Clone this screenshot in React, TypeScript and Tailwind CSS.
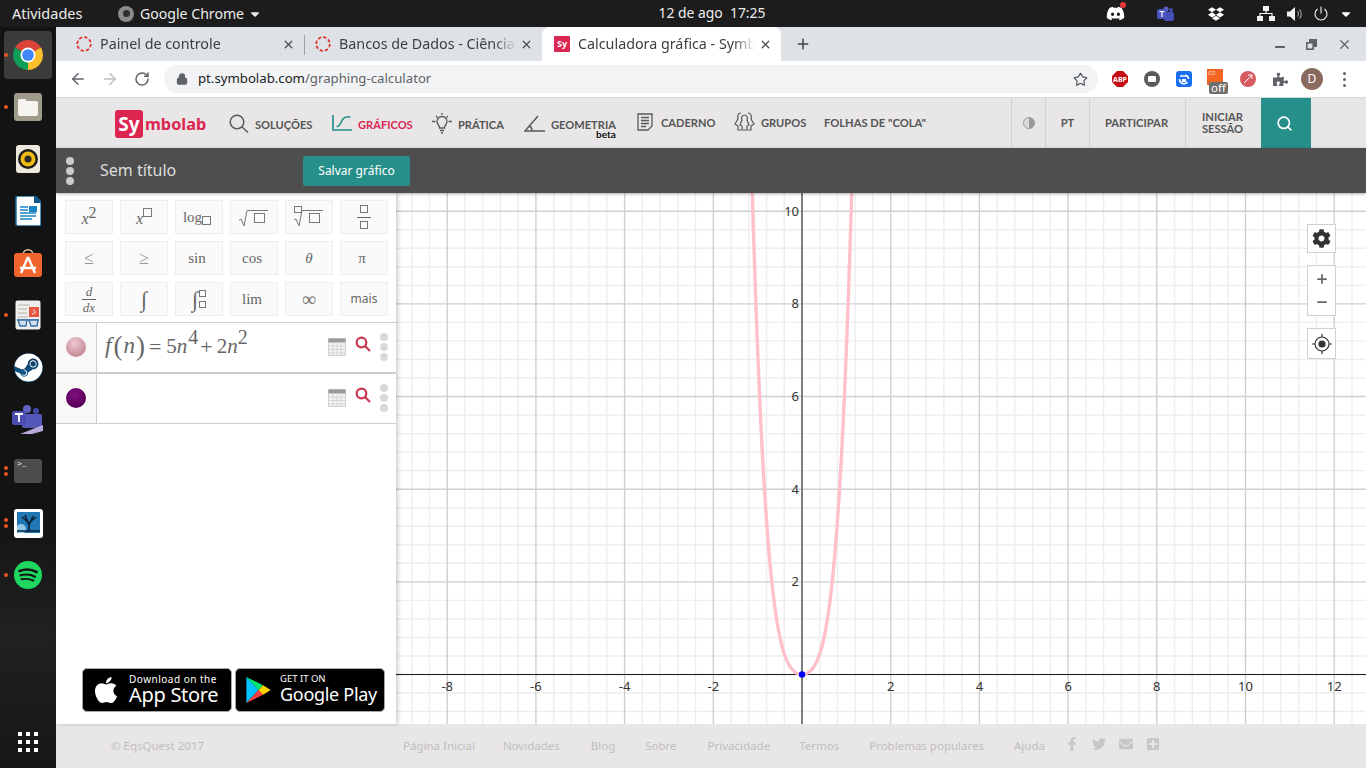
import React from "react";
import { FaApple, FaSteam, FaDiscord, FaDropbox, FaPuzzlePiece, FaFacebookF, FaTwitter, FaEnvelope, FaPlusSquare, FaCog, FaCaretDown } from "react-icons/fa";
import { ArrowLeft, ArrowRight, RotateCw, Lock, Star, X, Plus, Search, Minus } from "lucide-react";

const ux = 44.35, uy = 46.33, ox = 406, oy = 481.5;

const Chrome = ({ s = 48 }: { s?: number }) => (
  <svg width={s} height={s} viewBox="0 0 48 48">
    <path d="M24 24L6.7 14A20 20 0 0 1 41.3 14Z" fill="#db4437" />
    <path d="M24 24L41.3 14A20 20 0 0 1 24 44Z" fill="#fbc02d" />
    <path d="M24 24L24 44A20 20 0 0 1 6.7 14Z" fill="#0f9d58" />
    <circle cx="24" cy="24" r="10" fill="#fff" />
    <circle cx="24" cy="24" r="7.8" fill="#4285f4" />
  </svg>
);

const Dots = ({ n }: { n: number }) => (
  <div className="absolute left-[4px] top-0 bottom-0 flex flex-col justify-center gap-[2px]">
    {Array.from({ length: n }).map((_, i) => (
      <span key={i} className="w-[4px] h-[4px] rounded-full bg-[#e95420]" />
    ))}
  </div>
);

const DockItem = ({ n = 0, active = false, children }: { n?: number; active?: boolean; children: React.ReactNode }) => (
  <div className="relative h-[52px] w-[56px] flex items-center justify-center">
    {active && <div className="absolute left-[4px] right-[4px] top-[2px] bottom-[2px] rounded-[4px] bg-[#3c3c3c]" />}
    <Dots n={n} />
    <div className="relative flex items-center justify-center">{children}</div>
  </div>
);

const Dock = () => (
  <div className="w-[56px] shrink-0 flex flex-col pt-[2px] bg-[linear-gradient(180deg,#131313_0%,#131313_65%,#202123_82%,#151617_100%)]">
    <DockItem n={1} active><Chrome s={36} /></DockItem>
    <DockItem n={1}>
      <div className="w-[28px] h-[28px] rounded-[3px] bg-[#a09a8a] flex items-center justify-center">
        <svg width="22" height="22" viewBox="0 0 22 22"><path d="M1 5a2 2 0 0 1 2-2h5l2 2h9a2 2 0 0 1 2 2v11a2 2 0 0 1-2 2H3a2 2 0 0 1-2-2Z" fill="#f6f4f0" /></svg>
      </div>
    </DockItem>
    <DockItem>
      <div className="w-[24px] h-[28px] rounded-[3px] bg-[#ece8dc] flex items-center justify-center">
        <svg width="20" height="20" viewBox="0 0 20 20"><circle cx="10" cy="10" r="10" fill="#1d1d1b" /><circle cx="10" cy="10" r="7.5" fill="#f0b913" /><circle cx="10" cy="10" r="3.5" fill="#2a2a28" /></svg>
      </div>
    </DockItem>
    <DockItem>
      <svg width="26" height="30" viewBox="0 0 26 30">
        <path d="M1 2a2 2 0 0 1 2-2h17l6 6v22a2 2 0 0 1-2 2H3a2 2 0 0 1-2-2Z" fill="#fff" stroke="#1b6fa8" strokeWidth="1.5" />
        <path d="M19 0h2l5 5v2h-7Z" fill="#0f5a8a" />
        <path d="M5 11h8M5 14h8M5 17h16M5 20h16M5 23h12" stroke="#1b84c6" strokeWidth="1.5" />
        <rect x="14" y="10" width="8" height="6" fill="#1b84c6" />
      </svg>
    </DockItem>
    <DockItem>
      <svg width="30" height="30" viewBox="0 0 30 30">
        <path d="M10 7C10 0 20 0 20 7" fill="none" stroke="#e8c9a0" strokeWidth="1.5" />
        <rect x="1" y="5" width="28" height="24" rx="3" fill="#f0642d" />
        <path d="M15 9L8 25M15 9l7 16M7 20h16" stroke="#fff" strokeWidth="2.4" fill="none" />
      </svg>
    </DockItem>
    <DockItem n={1}>
      <svg width="26" height="30" viewBox="0 0 26 30">
        <rect x="0.5" y="0.5" width="25" height="29" rx="2" fill="#eeeeec" />
        <path d="M3 5h12M3 9h9M3 13h9M3 17h10" stroke="#b8b0a0" strokeWidth="1.2" />
        <rect x="14" y="7" width="10" height="10" fill="#e8563f" />
        <path d="M17 14c4 0 4-4 1-4" stroke="#fff" fill="none" />
        <path d="M2 20h22" stroke="#3b6fa8" strokeWidth="1.4" />
        <path d="M3 20h9l-1 6H5ZM14 20h9l-1 6h-6Z" fill="#cfe0ee" stroke="#3b6fa8" strokeWidth="1.4" />
      </svg>
    </DockItem>
    <DockItem>
      <div className="w-[29px] h-[29px] rounded-full bg-[linear-gradient(180deg,#0e2a4e,#0f6aa0)] flex items-center justify-center overflow-hidden">
        <FaSteam className="text-white text-[29px]" />
      </div>
    </DockItem>
    <DockItem>
      <svg width="32" height="30" viewBox="0 0 32 30">
        <circle cx="15" cy="5" r="4" fill="#6264c4" /><circle cx="24" cy="7" r="3" fill="#4648a8" />
        <rect x="10" y="10" width="20" height="14" rx="2" fill="#5558b8" />
        <rect x="0" y="7" width="14" height="14" rx="2" fill="#4a4cb0" />
        <path d="M3 10h8M7 10v8" stroke="#fff" strokeWidth="1.8" />
        <path d="M8 30L31 21v6L20 30Z" fill="#b9a7dc" />
      </svg>
    </DockItem>
    <DockItem n={2}>
      <div className="w-[28px] h-[24px] rounded-[3px] bg-[#4c4c4c] pl-[3px] font-['Liberation_Mono',monospace] text-[8px] leading-[10px] text-white">&gt;_</div>
    </DockItem>
    <DockItem n={2}>
      <div className="w-[29px] h-[29px] rounded-[3px] bg-white p-[3px] pb-[5px]">
        <svg width="23" height="21" viewBox="0 0 23 21">
          <rect width="23" height="21" fill="#1f78b4" />
          <circle cx="4" cy="17" r="5" fill="#8fc7ea" />
          <path d="M12 19V11L5 5M12 11l7-6M12 13L8 3M12 13l4-9M0 19h23" stroke="#0d2233" strokeWidth="1.6" fill="none" />
        </svg>
      </div>
    </DockItem>
    <DockItem n={1}>
      <div className="relative w-[28px] h-[28px] rounded-full bg-[#1ed760] flex items-center justify-center">
        <svg width="20" height="16" viewBox="0 0 20 16" fill="none" stroke="#131313" strokeLinecap="round">
          <path d="M1.5 4C7 2 14 2.5 18.5 5" strokeWidth="2.6" /><path d="M2.5 8.3C7.5 7 13 7.5 17 9.7" strokeWidth="2.2" /><path d="M3.5 12.3C8 11.4 12 11.8 15.5 13.6" strokeWidth="1.9" />
        </svg>
      </div>
    </DockItem>
    <div className="mt-auto h-[54px] flex items-start justify-center pt-[18px]">
      <div className="grid grid-cols-3 gap-[4px]">
        {Array.from({ length: 9 }).map((_, i) => <span key={i} className="w-[4px] h-[4px] bg-white" />)}
      </div>
    </div>
  </div>
);

const TopBar = () => (
  <div className="h-[27px] bg-[#1c1c1c] flex items-center text-[14.5px] text-[#ececec] font-['Noto_Sans',sans-serif] shrink-0">
    <div className="flex items-center w-[646px] shrink-0">
      <span className="ml-[12px] w-[106px]">Atividades</span>
      <span className="w-[16px] h-[16px] rounded-full bg-[#8a8a8a] flex items-center justify-center mr-[6px]"><span className="w-[7px] h-[7px] rounded-full bg-[#2e2e2e]" /></span>
      <span className="text-[14.1px]">Google Chrome</span>
      <FaCaretDown className="ml-[4px] text-[14px]" />
    </div>
    <span className="text-[13.9px] w-[132px] text-center whitespace-pre">12 de ago  17:25</span>
    <div className="flex-1 flex items-center justify-end pr-[13px]">
      <span className="relative mr-[32px]">
        <FaDiscord className="text-[19px] text-white" />
        <span className="absolute -top-[2px] right-[-1px] w-[6px] h-[6px] rounded-full bg-[#e5383b]" />
      </span>
      <svg width="18" height="16" viewBox="0 0 18 16" className="mr-[33px]">
        <circle cx="9" cy="3" r="2.6" fill="#5b5fc7" /><circle cx="14" cy="4" r="2" fill="#464eb8" />
        <rect x="7" y="6" width="10" height="9" rx="2" fill="#464eb8" /><rect x="0" y="3" width="10" height="10" rx="1.5" fill="#4b53bc" />
        <path d="M2.5 5.5h5M5 5.5V11" stroke="#fff" strokeWidth="1.2" />
      </svg>
      <FaDropbox className="text-[16px] text-white mr-[33px]" />
      <svg width="18" height="15" viewBox="0 0 18 15" fill="#f2f2f2" className="mr-[12px]">
        <rect x="6" y="0" width="6" height="5" /><rect x="0" y="10" width="6" height="5" /><rect x="12" y="10" width="6" height="5" />
        <path d="M9 5v3M3 10V7.5h12V10" stroke="#f2f2f2" fill="none" strokeWidth="1.2" />
      </svg>
      <svg width="16" height="14" viewBox="0 0 16 14" className="mr-[11px]">
        <path d="M0 4.5h3L8 0v14L3 9.5H0Z" fill="#f2f2f2" /><path d="M10.5 4.5a3.5 3.5 0 0 1 0 5M12.5 2.5a6.5 6.5 0 0 1 0 9" stroke="#9a9a9a" fill="none" strokeWidth="1.1" />
      </svg>
      <svg width="14" height="15" viewBox="0 0 14 15" fill="none" stroke="#f2f2f2" strokeWidth="1.1" className="mr-[11px]">
        <path d="M7 0.5v7M3.6 3A6 6 0 1 0 10.4 3" />
      </svg>
      <FaCaretDown className="text-[14px] text-white" />
    </div>
  </div>
);

const Tab = ({ title, w, pl, active = false, sep = false, sy = false }: { title: string; w: number; pl: string; active?: boolean; sep?: boolean; sy?: boolean }) => (
  <div style={{ width: w }} className={`relative h-[34px] flex items-center pr-[9px] ${pl} ${active ? "bg-white rounded-t-[8px]" : ""}`}>
    {sy ? (
      <span className="w-[16px] h-[16px] bg-[#dc2550] text-white text-[9px] font-bold flex items-center justify-center rounded-[1px] shrink-0">Sy</span>
    ) : (
      <svg width="16" height="16" viewBox="0 0 16 16" className="shrink-0"><circle cx="8" cy="8" r="6.800" fill="none" stroke="#e0352b" strokeWidth="1.800" strokeDasharray="3.300 2.040" /></svg>
    )}
    <div className="ml-[8px] flex-1 overflow-hidden whitespace-nowrap text-[14.3px] text-[#3c4043] [mask-image:linear-gradient(90deg,#000_88%,transparent)]">{title}</div>
    <X size={13} strokeWidth={2.4} className="text-[#4a4d51] shrink-0 ml-[4px]" />
    {sep && <span className="absolute right-[-1px] top-[8px] h-[20px] w-px bg-[#9aa0a6]" />}
  </div>
);

const TabStrip = () => (
  <div className="h-[34px] bg-[#dee1e6] flex items-center pl-[8px] font-['Noto_Sans',sans-serif] shrink-0">
    <Tab title="Painel de controle" w={240} pl="pl-[12px]" sep />
    <Tab title="Bancos de Dados - Ciência" w={238} pl="pl-[11px]" />
    <Tab title="Calculadora gráfica - Symb" w={239} pl="pl-[12px]" active sy />
    <Plus size={16} strokeWidth={2.2} className="ml-[14px] text-[#3c4043]" />
    <div className="ml-auto flex items-center text-[#5f6368]">
      <span className="w-[10px] h-[2px] bg-[#5f6368] mt-[6px] mr-[21px]" />
      <svg width="11" height="11" viewBox="0 0 11 11" className="mr-[20px]"><path d="M3 0h8v8H8V3H3Z" fill="#5f6368" /><rect x="0.8" y="3.8" width="6.4" height="6.4" fill="none" stroke="#5f6368" strokeWidth="1.6" /></svg>
      <X size={15} strokeWidth={2} className="mr-[14px]" />
    </div>
  </div>
);

const Ext = ({ children, w = 32 }: { children: React.ReactNode; w?: number }) => (
  <div style={{ width: w }} className="relative flex items-center justify-center h-[36px]">{children}</div>
);

const Toolbar = () => (
  <div className="h-[37px] bg-white border-b border-[#d8d8d8] flex items-center font-['Noto_Sans',sans-serif] shrink-0">
    <ArrowLeft size={18} strokeWidth={2} className="ml-[13px] text-[#5f6368]" />
    <ArrowRight size={18} strokeWidth={2} className="ml-[14px] text-[#bcbec1]" />
    <RotateCw size={16} strokeWidth={2.2} className="ml-[15px] text-[#5f6368]" />
    <div className="ml-[14px] w-[934px] h-[28px] rounded-full bg-[#f1f3f4] flex items-center">
      <Lock size={12} strokeWidth={2.6} fill="#5f6368" className="ml-[12px] text-[#5f6368]" />
      <span className="ml-[10px] text-[13.2px] text-[#202124]">pt.symbolab.com<span className="text-[#5f6368]">/graphing-calculator</span></span>
      <Star size={15} strokeWidth={1.8} className="ml-auto mr-[10px] text-[#4a4d51]" />
    </div>
    <div className="ml-[6px] flex items-center">
      <Ext>
        <div className="relative w-[16px] h-[16px] flex items-center justify-center">
          <svg width="16" height="16" viewBox="0 0 16 16" className="absolute inset-0"><path d="M5 0h6l5 5v6l-5 5H5l-5-5V5Z" fill="#c40c12" /></svg>
          <span className="relative text-white text-[7px] font-bold leading-none">ABP</span>
        </div>
      </Ext>
      <Ext><div className="w-[16px] h-[16px] rounded-full bg-[#5a5a5a] flex items-center justify-center"><span className="w-[8px] h-[6px] bg-white rounded-[1px]" /></div></Ext>
      <Ext>
        <div className="w-[16px] h-[16px] rounded-[3px] bg-[#1a6ef0] flex items-center justify-center">
          <svg width="12" height="12" viewBox="0 0 12 12" fill="none" stroke="#fff" strokeWidth="1.600"><path d="M2 3h6M1.500 6a4.500 4.500 0 0 0 8 3M10.500 6a4.500 4.500 0 0 0-3-4" /><path d="M4 6h4v3H4Z" fill="#fff" stroke="none" /></svg>
        </div>
      </Ext>
      <Ext>
        <div className="w-[16px] h-[16px] bg-[#f26522] -mt-[5px] -ml-[2px] text-[#ffd9c4] text-[7px] leading-[8px] pl-[1px]">co</div>
        <span className="absolute left-[9px] bottom-[3px] bg-[#6d6d6d] text-white text-[11.500px] leading-[12px] px-[2px] rounded-[2px]">off</span>
      </Ext>
      <Ext><div className="w-[16px] h-[16px] rounded-full bg-[#d65a60] flex items-center justify-center"><svg width="10" height="10" viewBox="0 0 10 10"><path d="M1 9L9 1M5 1h4v4" stroke="#fff" fill="none" strokeWidth="1" /></svg></div></Ext>
      <Ext><FaPuzzlePiece className="text-[15px] text-[#5f6368]" /></Ext>
      <Ext><div className="w-[22px] h-[22px] rounded-full bg-[#8a6a5f] text-white text-[12px] flex items-center justify-center">D</div></Ext>
      <Ext><div className="flex flex-col gap-[3px]">{[0, 1, 2].map(i => <span key={i} className="w-[3px] h-[3px] rounded-full bg-[#5f6368]" />)}</div></Ext>
    </div>
  </div>
);

const NavItem = ({ icon, label, w, color = "#555555", high = false, children }: { icon: React.ReactNode; label: string; w: number; color?: string; high?: boolean; children?: React.ReactNode }) => (
  <div style={{ width: w }} className="flex items-center shrink-0">
    {icon}
    <div className={`relative ${high ? "-mt-[4px]" : ""}`}>
      <span style={{ color }} className="text-[11.1px] font-bold whitespace-nowrap">{label}</span>
      {children}
    </div>
  </div>
);

const Nav = () => (
  <div className="h-[50px] bg-[#e8e6e7] flex items-center font-['Lato',sans-serif] shrink-0">
    <div className="ml-[59px] w-[114px] shrink-0 flex items-center font-['Noto_Sans',sans-serif] font-bold text-[16.3px] text-[#dc2550] mt-[2px]">
      <span className="w-[28px] h-[28px] rounded-[3px] bg-[#dc2550] text-white text-[19px] flex items-center justify-center">Sy</span>
      <span className="ml-[2px]">mbolab</span>
    </div>
    <NavItem w={103} label="SOLUÇÕES" icon={<svg width="20" height="19" viewBox="0 0 20 19" fill="none" stroke="#5a5a5a" strokeWidth="1.500" className="mr-[6px]"><circle cx="8" cy="8" r="6.800" /><path d="M13 13l6 5.500" /></svg>} />
    <NavItem w={100} label="GRÁFICOS" color="#dc2550" icon={<svg width="20" height="16" viewBox="0 0 20 16" fill="none" stroke="#268f8a" strokeWidth="1.700" className="mr-[6px]"><path d="M1 0v15h19" /><path d="M4.500 11.500c6 0 3.500-9 10-9.500h4" /></svg>} />
    <NavItem w={92} label="PRÁTICA" icon={<svg width="20" height="21" viewBox="0 0 20 21" fill="none" stroke="#5a5a5a" strokeWidth="1.300" className="mr-[6px]"><path d="M7.500 15c0-3-2.500-3.500-2.500-6.500a5 5 0 0 1 10 0c0 3-2.500 3.500-2.500 6.500ZM8 17.500h4M9 20h2M10 0v2M3.500 8.500H0M20 8.500h-3.500M4 3l1.500 1.500M16 3l-1.500 1.500" /></svg>} />
    <NavItem w={113} label="GEOMETRIA" icon={<svg width="21" height="17" viewBox="0 0 21 17" fill="none" stroke="#5a5a5a" strokeWidth="1.500" className="mr-[6px]"><path d="M21 16H1L14 1M8 16c0-2.500-1-4.500-3-5.500" /></svg>}>
      <span className="absolute right-0 top-[18px] text-[10px] font-bold text-[#111] leading-none">beta</span>
    </NavItem>
    <NavItem w={97} high label="CADERNO" icon={<svg width="16" height="18" viewBox="0 0 16 18" fill="none" stroke="#5a5a5a" strokeWidth="1.300" className="mr-[8px] -mt-[3px]"><path d="M1 1h14v12l-4 4H1ZM4 4.500h8M4 7.500h8M4 10.500h8M4 13.500h5" /></svg>} />
    <NavItem w={90} high label="GRUPOS" icon={<svg width="21" height="19" viewBox="0 0 21 19" fill="none" stroke="#5a5a5a" strokeWidth="1.200" className="mr-[6px] -mt-[3px]"><path d="M7 1c-3 0-4 3-3 6l-3 5 3 2v4h3M14 1c3 0 4 3 3 6l3 5-3 2v4h-3" /><path d="M10.500 3c2.500 0 3.500 3 2.500 5l2 5-2 1v4H8v-4l-2-1 2-5c-1-2 0-5 2.500-5Z" /></svg>} />
    <span className="text-[11.2px] font-bold text-[#555555] w-[187px] shrink-0 whitespace-nowrap">FOLHAS DE "COLA"</span>
    <div className="h-full w-[34px] border-l border-[#d2d0d1] flex items-center justify-center shrink-0">
      <span className="w-[12px] h-[12px] rounded-full border border-[#999] bg-[linear-gradient(90deg,#ddd_50%,#999_50%)]" />
    </div>
    <div className="h-full w-[44px] border-l border-[#d2d0d1] flex items-center justify-center text-[11.2px] font-bold text-[#555555] shrink-0">PT</div>
    <div className="h-full w-[96px] border-l border-[#d2d0d1] flex items-center justify-center pr-[2px] text-[11.2px] font-bold text-[#555555] shrink-0">PARTICIPAR</div>
    <div className="h-full w-[76px] border-l border-[#d2d0d1] flex items-center justify-center pr-[2px] text-center text-[11.2px] leading-[12px] font-bold text-[#555555] shrink-0">INICIAR<br />SESSÃO</div>
    <div className="h-full w-[50px] bg-[#268f8a] flex items-center justify-center shrink-0 pr-[4px]"><Search size={17} strokeWidth={2.4} className="text-white" /></div>
  </div>
);

const Box = ({ s = 9 }: { s?: number }) => <span style={{ width: s, height: s }} className="inline-block border border-[#777] align-baseline" />;

const Key = ({ children, sans = false, shift = false }: { children: React.ReactNode; sans?: boolean; shift?: boolean }) => (
  <div className={`w-[48px] h-[34px] border border-[#eeeeee] bg-[#fafafa] flex items-center justify-center text-[#666] whitespace-nowrap ${shift ? "pr-[4px]" : ""} ${sans ? "font-['Noto_Sans',sans-serif] text-[12px]" : "text-[15px]"}`}>{children}</div>
);

const Root = ({ idx = false }: { idx?: boolean }) => (
  <svg width="32" height="22" viewBox="0 0 32 22" fill="none" stroke="#777">
    {idx && <rect x="1.500" y="0.500" width="7" height="6" />}
    <path d="M1 14l2-1 3 7 3-15.500h21" />
    <rect x="16.500" y="7.500" width="10" height="9" />
  </svg>
);

const Frac = ({ a, b }: { a: React.ReactNode; b: React.ReactNode }) => (
  <span className="inline-flex flex-col items-center leading-none">
    <span className="flex items-center justify-center h-[13px] text-[13px]">{a}</span>
    <span className="w-[14px] h-px bg-[#666] my-[1px]" />
    <span className="flex items-center justify-center h-[13px] text-[13px]">{b}</span>
  </span>
);

const Keys = () => (
  <div className="grid grid-cols-[repeat(6,48px)] gap-[7px] pl-[9px] pt-[7px] pb-[6px] font-['Liberation_Serif',serif]">
    <Key><i className="text-[16px] mt-[3px]">x</i><span className="text-[16px] -mt-[8px]">2</span></Key>
    <Key><i className="text-[16px] mt-[3px]">x</i><span className="-mt-[9px] flex"><Box /></span></Key>
    <Key shift><span>log</span><span className="mt-[7px] flex"><Box /></span></Key>
    <Key><Root /></Key>
    <Key><Root idx /></Key>
    <Key><Frac a={<Box s={8} />} b={<Box s={8} />} /></Key>
    <Key><span className="text-[18px] text-[#999]">≤</span></Key>
    <Key><span className="text-[18px] text-[#999]">≥</span></Key>
    <Key shift>sin</Key>
    <Key shift>cos</Key>
    <Key><i>θ</i></Key>
    <Key shift>π</Key>
    <Key><Frac a={<i>d</i>} b={<i>dx</i>} /></Key>
    <Key><i className="text-[22px]">∫</i></Key>
    <Key><i className="text-[22px]">∫</i><span className="flex flex-col gap-[4px] ml-[1px]"><Box s={7} /><Box s={7} /></span></Key>
    <Key shift>lim</Key>
    <Key><span className="text-[20px] text-[#777]">∞</span></Key>
    <Key sans>mais</Key>
  </div>
);

const ExprRow = ({ ball, children, cls }: { ball: string; children?: React.ReactNode; cls: string }) => (
  <div className={`flex border-[#cdcdcd] ${cls}`}>
    <div className="w-[41px] bg-[#f8f8f8] border-r border-[#cdcdcd] flex items-center justify-center shrink-0 pb-[1px]">
      <span className="w-[20px] h-[20px] rounded-full" style={{ background: ball }} />
    </div>
    <div className="flex-1 pl-[8px] flex items-center text-[21px] text-[#666] font-['Liberation_Serif',serif] whitespace-nowrap">{children}</div>
    <svg width="18" height="18" viewBox="0 0 18 18" className="self-center shrink-0 -mt-[2px]">
      <rect x="0.500" y="0.500" width="17" height="17" fill="#f4f4f4" stroke="#cfcfcf" />
      <rect x="0.500" y="0.500" width="17" height="4" fill="#9a9a9a" />
      <path d="M0 8h18M0 11.500h18M0 15h18M5 4v14M9 4v14M13 4v14" stroke="#d5d5d5" />
    </svg>
    <svg width="16" height="16" viewBox="0 0 16 16" fill="none" stroke="#c8374f" strokeWidth="2.200" className="self-center ml-[9px] -mt-[8px] shrink-0">
      <circle cx="6.500" cy="6.500" r="4.800" /><path d="M10 10l5 5" />
    </svg>
    <div className="w-[24px] flex flex-col items-center justify-center gap-[2px] shrink-0 ml-[1px] pb-[1px]">
      {[0, 1, 2].map(i => <span key={i} className="w-[8px] h-[8px] rounded-full bg-[#d9d9d9]" />)}
    </div>
  </div>
);

const Badge = ({ icon, top, bottom, bSize, tSize, track, iw }: { icon: React.ReactNode; top: string; bottom: string; bSize: string; tSize: string; track: string; iw: string }) => (
  <div className="w-[150px] h-[44px] rounded-[5px] bg-black border border-[#a6a6a6] flex items-center text-white font-['Noto_Sans',sans-serif] whitespace-nowrap">
    <div className={`${iw} flex justify-center shrink-0`}>{icon}</div>
    <div className="flex flex-col leading-none">
      <span className={`${tSize} ${track}`}>{top}</span>
      <span className={`${bSize} -mt-[1px] tracking-[-0.3px] leading-[23px]`}>{bottom}</span>
    </div>
  </div>
);

const Sidebar = () => (
  <div className="relative z-10 w-[340px] bg-white shadow-[2px_0_4px_rgba(0,0,0,0.2)] flex flex-col shrink-0">
    <Keys />
    <ExprRow ball="radial-gradient(circle at 42% 30%,#f0c8d0,#cc96a2 60%,#ac7684)" cls="h-[50px] border-t">
      <span className="relative flex items-center -mt-[2px]">
        <i className="text-[23px]">f</i><span className="text-[27px] font-light ml-[2px] mr-[1px]">(</span><i className="text-[23px]">n</i><span className="text-[27px] ml-[1px]">)</span>
        <span className="ml-[4px] text-[22px]">=</span><span className="ml-[5px]">5</span><i>n</i><span className="text-[20px] -mt-[20px] ml-[1px]">4</span>
        <span className="ml-[2px] text-[22px]">+</span><span className="ml-[4px]">2</span><i>n</i><span className="text-[20px] -mt-[20px]">2</span>
      </span>
    </ExprRow>
    <ExprRow ball="radial-gradient(circle at 42% 30%,#801080,#5a005a 65%,#460046)" cls="h-[52px] border-t-[2px] border-b"></ExprRow>
    <div className="mt-auto mb-[12px] ml-[26px] flex gap-[3px]">
      <Badge iw="w-[46px]" icon={<FaApple className="text-[30px]" />} top="Download on the" bottom="App Store" tSize="text-[10px]" track="tracking-[0.5px]" bSize="text-[20px]" />
      <Badge iw="w-[44px]"
        icon={<svg width="27" height="28" viewBox="0 0 28 30"><path d="M1 1v28l13-14Z" fill="#00c3ff" /><path d="M1 1l13 14 5-5Z" fill="#00e676" /><path d="M1 29l13-14 5 5Z" fill="#ff3d47" /><path d="M19 10l-5 5 5 5 8-5Z" fill="#ffd400" /></svg>}
        top="GET IT ON" bottom="Google Play" tSize="text-[9.500px]" track="" bSize="text-[18px]" />
    </div>
  </div>
);

const Graph = () => {
  const W = 970, H = 531;
  const xs: number[] = [], ys: number[] = [];
  for (let i = -30; i <= 35; i++) xs.push(i);
  for (let i = -5; i <= 28; i++) ys.push(i);
  let d = "";
  for (let n = -1.25; n <= 1.25; n += 0.01) {
    const y = 5 * n ** 4 + 2 * n ** 2;
    d += `${d ? "L" : "M"}${(ox + n * ux).toFixed(2)} ${(oy - y * uy).toFixed(2)}`;
  }
  const lx = [-8, -6, -4, -2, 2, 4, 6, 8, 10, 12];
  const ly = [2, 4, 6, 8, 10];
  return (
    <svg width={W} height={H} viewBox={`0 0 ${W} ${H}`} className="block">
      <rect width={W} height={H} fill="#fff" />
      {xs.map(i => i % 5 !== 0 && <line key={i} x1={ox + i * ux * 0.4} x2={ox + i * ux * 0.4} y1={0} y2={H} stroke="#eeeeee" strokeWidth="1.4" />)}
      {ys.map(i => i % 5 !== 0 && <line key={i} y1={oy - i * uy * 0.4} y2={oy - i * uy * 0.4} x1={0} x2={W} stroke="#eeeeee" strokeWidth="1.4" />)}
      {xs.map(i => i % 5 === 0 && <line key={i} x1={ox + i * ux * 0.4} x2={ox + i * ux * 0.4} y1={0} y2={H} stroke="#cfcfcf" strokeWidth="1.4" />)}
      {ys.map(i => i % 5 === 0 && <line key={i} y1={oy - i * uy * 0.4} y2={oy - i * uy * 0.4} x1={0} x2={W} stroke="#cfcfcf" strokeWidth="1.4" />)}
      <line x1={ox} x2={ox} y1={0} y2={H} stroke="#666" strokeWidth="1.6" />
      <line x1={0} x2={W} y1={oy} y2={oy} stroke="#222" strokeWidth="1.2" />
      <path d={d} fill="none" stroke="#ffc0cb" strokeWidth="3.4" />
      <circle cx={ox} cy={oy} r="3.2" fill="#0000ff" />
      <g fontFamily="'Noto Sans',sans-serif" fontSize="13" fill="#333">
        {lx.map(v => <text key={v} x={ox + v * ux} y={oy + 16} textAnchor="middle">{v}</text>)}
        {ly.map(v => <text key={v} x={ox - 3} y={oy - v * uy + 4.500} textAnchor="end">{v}</text>)}
      </g>
    </svg>
  );
};

const CtlBox = ({ h, children }: { h: number; children: React.ReactNode }) => (
  <div style={{ height: h }} className="w-[29px] bg-white border border-[#d0d0d0] flex flex-col items-center justify-center">{children}</div>
);

const GraphArea = () => (
  <div className="relative flex-1 overflow-hidden">
    <Graph />
    <div className="absolute left-[911px] top-[31px] flex flex-col">
      <CtlBox h={29}><FaCog className="text-[19px] text-[#333]" /></CtlBox>
      <div className="mt-[12px]"><CtlBox h={51}>
        <Plus size={14} strokeWidth={3} className="text-[#666] mb-[9px]" />
        <Minus size={14} strokeWidth={3} className="text-[#666]" />
      </CtlBox></div>
      <div className="mt-[12px]"><CtlBox h={31}>
        <svg width="20" height="20" viewBox="0 0 20 20" fill="none" stroke="#333" strokeWidth="1.200">
          <circle cx="10" cy="10" r="7" /><circle cx="10" cy="10" r="3.600" fill="#333" stroke="none" /><path d="M10 0v3M10 17v3M0 10h3M17 10h3" />
        </svg>
      </CtlBox></div>
    </div>
  </div>
);

const Footer = () => (
  <div className="h-[44px] bg-[#e8e6e7] flex items-center text-[11.500px] text-[#c0bebf] font-['Noto_Sans',sans-serif] shrink-0">
    <span className="ml-[55px] w-[292px]">© EqsQuest 2017</span>
    <div className="flex gap-[29px]">
      <span className="-mr-[1px]">Página Inicial</span><span>Novidades</span><span className="ml-[2px]">Blog</span><span className="ml-[1px]">Sobre</span><span className="ml-[2px]">Privacidade</span><span>Termos</span><span className="ml-[1px]">Problemas populares</span><span className="ml-[1px]">Ajuda</span>
    </div>
    <div className="flex items-center gap-[13px] ml-[20px] -mt-[5px] text-[14px] text-[#c8c6c7]">
      <FaFacebookF /><FaTwitter /><FaEnvelope /><FaPlusSquare />
    </div>
  </div>
);

export default function App() {
  return (
    <div className="w-[1366px] h-[768px] overflow-hidden flex flex-col bg-white">
      <TopBar />
      <div className="flex-1 flex min-h-0">
        <Dock />
        <div className="flex-1 flex flex-col min-w-0">
          <TabStrip />
          <Toolbar />
          <Nav />
          <div className="h-[45px] bg-[#4e4e4e] flex items-center shrink-0 shadow-[0_1px_3px_rgba(0,0,0,0.3)] relative z-20">
            <div className="ml-[10px] flex flex-col gap-[2px]">
              {[0, 1, 2].map(i => <span key={i} className="w-[8px] h-[8px] rounded-full bg-[#c9c9c9]" />)}
            </div>
            <span className="ml-[26px] w-[203px] text-[16px] leading-[22px] -mt-[1px] text-[#dddddd] font-['Noto_Sans',sans-serif]">Sem título</span>
            <button className="w-[107px] h-[30px] rounded-[2px] bg-[#268f8a] text-white text-[12px] font-['Noto_Sans',sans-serif]">Salvar gráfico</button>
          </div>
          <div className="flex-1 flex min-h-0">
            <Sidebar />
            <GraphArea />
          </div>
          <Footer />
        </div>
      </div>
    </div>
  );
}
